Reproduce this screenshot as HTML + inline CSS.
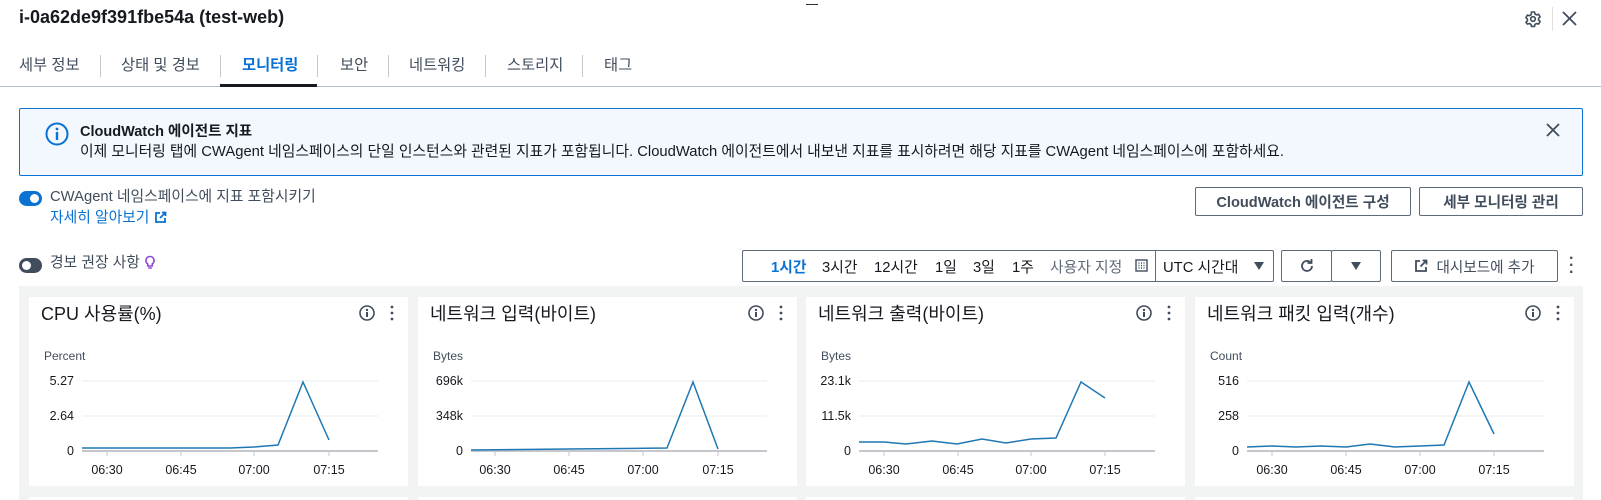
<!DOCTYPE html>
<html><head><meta charset="utf-8"><style>
*{margin:0;padding:0;box-sizing:border-box}
body{width:1601px;height:500px;overflow:hidden;background:#fff;font-family:"Liberation Sans","Noto Sans CJK KR",sans-serif;color:#16191f;position:relative}
.a{position:absolute;white-space:nowrap}
.tab{position:absolute;top:53px;font-size:15.3px;color:#414d5c}
.sep{position:absolute;top:55px;width:1px;height:22px;background:#c6c6cd}
.btn{position:absolute;border:1px solid #5f6b7a;border-radius:2px;background:#fff;font-size:14.6px;font-weight:bold;color:#414d5c;display:flex;align-items:center;justify-content:center}
.tog{position:absolute;width:23px;height:15px;border-radius:8px}
.tog::after{content:"";position:absolute;top:3px;width:9px;height:9px;border-radius:50%;background:#fff}
.tog.on::after{left:11px}.tog.off::after{left:3px}
.t{position:absolute;top:256px;font-size:14.8px}
</style></head><body>
<div class="a" style="left:19px;top:7px;font-size:18px;font-weight:bold">i-0a62de9f391fbe54a (test-web)</div>
<div class="a" style="left:806px;top:4px;width:12px;height:1px;background:#333"></div>
<svg class="a" style="left:1524px;top:10px" width="18" height="18" viewBox="0 0 18 18"><path d="M7.5 2h3l.5 2 1.6.9 2-.6 1.5 2.6-1.5 1.4v1.8l1.5 1.4-1.5 2.6-2-.6-1.6.9-.5 2h-3l-.5-2-1.6-.9-2 .6L1.9 12.3l1.5-1.4V9.1L1.9 7.7 3.4 5.1l2 .6L7 4.8z" fill="none" stroke="#414d5c" stroke-width="1.6" stroke-linejoin="round"/><circle cx="9" cy="9" r="2.3" fill="none" stroke="#414d5c" stroke-width="1.6"/></svg>
<div class="a" style="left:1552px;top:7px;width:1px;height:24px;background:#e0e0e0"></div>
<svg class="a" style="left:1562px;top:11px" width="15" height="15"><path d="M1 1L14 14M14 1L1 14" stroke="#414d5c" stroke-width="1.8"/></svg>

<div class="tab" style="left:19px">세부 정보</div>
<div class="sep" style="left:100px"></div>
<div class="tab" style="left:121px">상태 및 경보</div>
<div class="sep" style="left:220px"></div>
<div class="tab" style="left:242px;color:#0972d3;font-weight:bold">모니터링</div>
<div class="sep" style="left:317px"></div>
<div class="tab" style="left:340px">보안</div>
<div class="sep" style="left:388px"></div>
<div class="tab" style="left:409px">네트워킹</div>
<div class="sep" style="left:485px"></div>
<div class="tab" style="left:507px">스토리지</div>
<div class="sep" style="left:582px"></div>
<div class="tab" style="left:604px">태그</div>
<div class="a" style="left:0;top:86px;width:1601px;height:1px;background:#b6bec9"></div>
<div class="a" style="left:220px;top:84px;width:97px;height:3px;background:#16191f"></div>

<div class="a" style="left:19px;top:108px;width:1564px;height:68px;background:#f2f8fd;border:1px solid #0972d3;border-radius:2px"></div>
<svg class="a" style="left:45px;top:122px" width="24" height="24"><circle cx="12" cy="12" r="10.5" fill="none" stroke="#0972d3" stroke-width="2"/><circle cx="12" cy="7" r="1.4" fill="#0972d3"/><rect x="10.8" y="10" width="2.4" height="8" fill="#0972d3"/></svg>
<div class="a" style="left:80px;top:120px;font-size:14.5px;font-weight:bold">CloudWatch 에이전트 지표</div>
<div class="a" style="left:80px;top:140px;font-size:14.8px">이제 모니터링 탭에 CWAgent 네임스페이스의 단일 인스턴스와 관련된 지표가 포함됩니다. CloudWatch 에이전트에서 내보낸 지표를 표시하려면 해당 지표를 CWAgent 네임스페이스에 포함하세요.</div>
<svg class="a" style="left:1546px;top:123px" width="14" height="14"><path d="M1 1L13 13M13 1L1 13" stroke="#414d5c" stroke-width="1.8"/></svg>

<div class="tog on" style="left:19px;top:191px;background:#0972d3"></div>
<div class="a" style="left:50px;top:185px;font-size:14.8px;color:#414d5c">CWAgent 네임스페이스에 지표 포함시키기</div>
<div class="a" style="left:50px;top:206px;font-size:14.8px;color:#0972d3">자세히 알아보기 <svg width="13" height="13" style="vertical-align:-2px"><path d="M6 2H2v9h9V7M8 1.5h3.5V5M11.5 1.5L6 7" fill="none" stroke="#0972d3" stroke-width="1.8"/></svg></div>
<div class="btn" style="left:1195px;top:187px;width:216px;height:29px">CloudWatch 에이전트 구성</div>
<div class="btn" style="left:1419px;top:187px;width:164px;height:29px">세부 모니터링 관리</div>

<div class="tog off" style="left:19px;top:258px;background:#414d5c"></div>
<div class="a" style="left:50px;top:251px;font-size:14.8px;color:#414d5c">경보 권장 사항 <svg width="12" height="15" style="vertical-align:-3px"><path d="M6 1.5a4 4 0 0 0-2.3 7.3V11h4.6V8.8A4 4 0 0 0 6 1.5zM4.2 13h3.6" fill="none" stroke="#8d47d9" stroke-width="1.6"/></svg></div>

<div class="a" style="left:742px;top:250px;width:532px;height:32px;border:1px solid #5f6b7a;border-radius:2px"></div>
<div class="t" style="left:771px;font-weight:bold;color:#0972d3">1시간</div>
<div class="t" style="left:822px">3시간</div>
<div class="t" style="left:874px">12시간</div>
<div class="t" style="left:935px">1일</div>
<div class="t" style="left:973px">3일</div>
<div class="t" style="left:1012px">1주</div>
<div class="t" style="left:1050px;color:#5f6b7a">사용자 지정</div>
<svg class="a" style="left:1135px;top:259px" width="13" height="13"><rect x="1" y="1" width="11" height="11" fill="none" stroke="#414d5c" stroke-width="1.4"/><path d="M3.5 4h1M6 4h1M8.5 4h1M3.5 6.5h1M6 6.5h1M8.5 6.5h1M3.5 9h1M6 9h1M8.5 9h1" stroke="#414d5c" stroke-width="1.4"/></svg>
<div class="a" style="left:1155px;top:250px;width:1px;height:32px;background:#5f6b7a"></div>
<div class="t" style="left:1163px">UTC 시간대</div>
<div class="a" style="left:1254px;top:262px;width:0;height:0;border-left:5px solid transparent;border-right:5px solid transparent;border-top:8px solid #414d5c"></div>
<div class="btn" style="left:1281px;top:250px;width:51px;height:32px"><svg width="16" height="16"><path d="M13 8a5 5 0 1 1-1.6-3.7" fill="none" stroke="#414d5c" stroke-width="1.8"/><path d="M12.5 1v4h-4" fill="none" stroke="#414d5c" stroke-width="1.8"/></svg></div>
<div class="btn" style="left:1331px;top:250px;width:50px;height:32px"><div style="width:0;height:0;border-left:5px solid transparent;border-right:5px solid transparent;border-top:8px solid #414d5c"></div></div>
<div class="btn" style="left:1391px;top:250px;width:167px;height:32px;font-weight:normal"><svg width="14" height="14" style="margin-right:8px"><path d="M6 2H2v10h10V8M8.5 1.5h4V5.5M12.5 1.5L6.5 7.5" fill="none" stroke="#414d5c" stroke-width="1.8"/></svg>대시보드에 추가</div>
<div class="a" style="left:1569px;top:255px;font-size:16px;font-weight:bold;color:#414d5c;line-height:7px">·<br>·<br>·</div>

<div class="a" style="left:19px;top:286px;width:1564px;height:214px;background:#f2f3f3"></div>

<svg class="a" style="left:0;top:286px" width="1601" height="214" viewBox="0 286 1601 214" font-family="Liberation Sans, Noto Sans CJK KR, sans-serif">
<g fill="#fff">
<rect x="29" y="297" width="379" height="189"/><rect x="418" y="297" width="379" height="189"/><rect x="806" y="297" width="379" height="189"/><rect x="1195" y="297" width="379" height="189"/>
<rect x="29" y="497" width="379" height="10"/><rect x="418" y="497" width="379" height="10"/><rect x="806" y="497" width="379" height="10"/><rect x="1195" y="497" width="379" height="10"/>
</g>
<g font-size="18" fill="#16191f">
<text x="41" y="320">CPU 사용률(%)</text>
<text x="430" y="320">네트워크 입력(바이트)</text>
<text x="818" y="320">네트워크 출력(바이트)</text>
<text x="1207" y="320">네트워크 패킷 입력(개수)</text>
</g>
<g id="ic">
<circle cx="367" cy="313" r="7" fill="none" stroke="#414d5c" stroke-width="1.6"/><circle cx="367" cy="310" r="1.2" fill="#414d5c"/><rect x="366" y="312" width="2" height="5" fill="#414d5c"/>
<circle cx="392" cy="307" r="1.4" fill="#414d5c"/><circle cx="392" cy="313" r="1.4" fill="#414d5c"/><circle cx="392" cy="319" r="1.4" fill="#414d5c"/>
</g>
<use href="#ic" x="389"/><use href="#ic" x="777"/><use href="#ic" x="1166"/>
<g font-size="12" fill="#414d5c">
<text x="44" y="360">Percent</text><text x="433" y="360">Bytes</text><text x="821" y="360">Bytes</text><text x="1210" y="360">Count</text>
</g>
<g stroke="#e9ebed" stroke-width="1">
<path d="M82 381H378M82 416H378M471 381H767M471 416H767M859 381H1155M859 416H1155M1247 381H1544M1247 416H1544"/>
</g>
<g stroke="#c6c6cd" stroke-width="2">
<path d="M82 451H378M471 451H767M859 451H1155M1247 451H1544"/>
</g>
<g stroke="#c6c6cd" stroke-width="1">
<path d="M107 451v5M181 451v5M254 451v5M329 451v5M495 451v5M569 451v5M643 451v5M718 451v5M884 451v5M958 451v5M1031 451v5M1105 451v5M1272 451v5M1346 451v5M1420 451v5M1494 451v5"/>
</g>
<g font-size="12.5" fill="#16191f" text-anchor="end">
<text x="74" y="385">5.27</text><text x="74" y="420">2.64</text><text x="74" y="455">0</text>
<text x="463" y="385">696k</text><text x="463" y="420">348k</text><text x="463" y="455">0</text>
<text x="851" y="385">23.1k</text><text x="851" y="420">11.5k</text><text x="851" y="455">0</text>
<text x="1239" y="385">516</text><text x="1239" y="420">258</text><text x="1239" y="455">0</text>
</g>
<g font-size="12.5" fill="#16191f" text-anchor="middle">
<text x="107" y="474">06:30</text><text x="181" y="474">06:45</text><text x="254" y="474">07:00</text><text x="329" y="474">07:15</text>
<text x="495" y="474">06:30</text><text x="569" y="474">06:45</text><text x="643" y="474">07:00</text><text x="718" y="474">07:15</text>
<text x="884" y="474">06:30</text><text x="958" y="474">06:45</text><text x="1031" y="474">07:00</text><text x="1105" y="474">07:15</text>
<text x="1272" y="474">06:30</text><text x="1346" y="474">06:45</text><text x="1420" y="474">07:00</text><text x="1494" y="474">07:15</text>
</g>
<g fill="none" stroke="#1f77b4" stroke-width="1.5">
<polyline points="82,448 230,448 254,447 278,445 303,382 329,440"/>
<polyline points="471,450 570,449 667,448 693,382 718,449"/>
<polyline points="859,442 884,442 906,444 932,441 957,444 982,439 1006,443 1031,439 1056,438 1081,382 1105,398"/>
<polyline points="1247,447 1272,446 1296,447 1321,446 1346,447 1370,444 1395,447 1420,446 1444,445 1469,382 1494,434"/>
</g>
</svg>
</body></html>
